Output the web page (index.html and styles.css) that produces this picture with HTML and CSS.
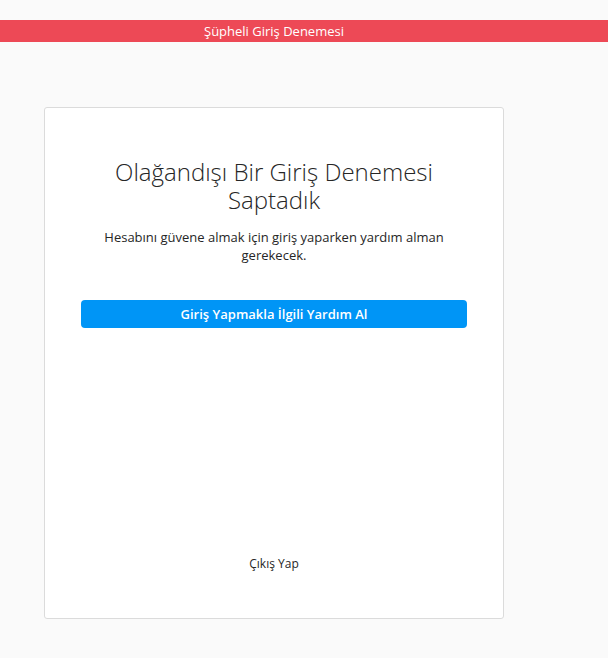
FILE: index.html
```html
<!DOCTYPE html>
<html lang="tr">
<head>
  <meta charset="UTF-8" />
  <meta name="viewport" content="width=device-width, initial-scale=1.0" />
  <title>Şüpheli Giriş Denemesi</title>
  <link rel="stylesheet" href="styles.css">
</head>
<body>
  <div class="alert-bar">Şüpheli Giriş Denemesi</div>

  <div class="card">
    <h1>Olağandışı Bir Giriş Denemesi Saptadık</h1>
    <p class="info">Hesabını güvene almak için giriş yaparken yardım alman gerekecek.</p>
    <button class="help-btn">Giriş Yapmakla İlgili Yardım Al</button>
    <div class="spacer"></div>
    <a class="logout" href="#">Çıkış Yap</a>
  </div>
</body>
</html>
```

FILE: styles.css
```css
:root {
  --red: #ed4956;
  --blue: #0095f6;
  --border-color: #dbdbdb;
  --font-color: #262626;
}

* {
  box-sizing: border-box;
}

body {
  margin: 0;
  padding: 20px 0 0;
  background-color: #fafafa;
  color: var(--font-color);
  font-family: 'Open Sans', 'Noto Sans', sans-serif;
}

.alert-bar {
  background-color: var(--red);
  color: white;
  height: 22px;
  line-height: 22px;
  font-size: 13px;
  padding-left: 204px;
}

.card {
  width: 460px;
  height: 512px;
  margin: 65px 0 0 44px;
  background: white;
  border: 1px solid var(--border-color);
  border-radius: 3px;
  padding: 50px 36px 46px;
  display: flex;
  flex-direction: column;
  align-items: center;
  text-align: center;
}

h1 {
  margin: 0 0 14px;
  font-size: 24px;
  font-weight: 300;
  line-height: 28px;
}

.info {
  margin: 0 0 36px;
  font-size: 13px;
  line-height: 18px;
  padding: 0 18px;
}

.help-btn {
  width: 100%;
  height: 28px;
  background-color: var(--blue);
  color: white;
  border: none;
  border-radius: 4px;
  font-family: inherit;
  font-size: 13px;
  font-weight: 600;
  cursor: pointer;
}

.spacer {
  flex: 1;
}

.logout {
  font-size: 12px;
  color: var(--font-color);
  text-decoration: none;
}
```
